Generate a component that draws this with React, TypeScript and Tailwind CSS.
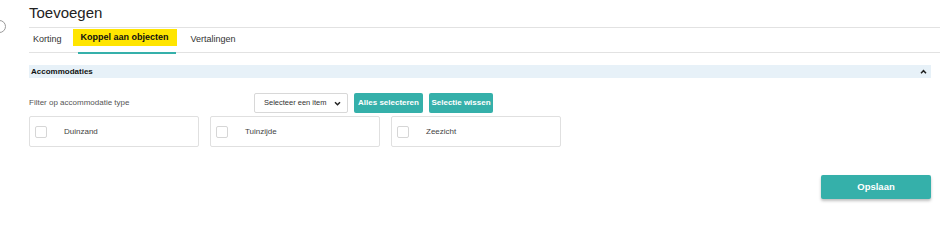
const TEAL = 'bg-[#35b0aa]';

const ACCOMMODATIES = ['Duinzand', 'Tuinzijde', 'Zeezicht'];

function Chevron({ up = false }: { up?: boolean }) {
  return (
    <svg width="7" height="5" viewBox="0 0 8 6" className="shrink-0">
      <polyline
        points={up ? '1,5 4,2 7,5' : '1,1.5 4,4.5 7,1.5'}
        fill="none"
        stroke="#222"
        strokeWidth="1.8"
      />
    </svg>
  );
}

export default function App() {
  return (
    <div className="relative min-h-[244px] bg-white font-['Liberation_Sans',Arial,sans-serif] text-[#333]">
      {/* half-hidden back circle */}
      <div className="absolute left-[-7px] top-[20px] h-[13px] w-[13px] rounded-full border border-[#9a9a9a]" />

      <div className="pl-[29px] pr-[5px]">
        <div className="h-[28px] border-b border-[#e2e2e2] pt-[4px]">
          <h1 className="text-[15px] leading-[18px] text-[#222]">Toevoegen</h1>
        </div>

        <div className="flex h-[25px] items-start border-b border-[#e2e2e2] text-[9px]">
          <button className="ml-[4px] mt-[6px] leading-[11px] text-[#333]">Korting</button>
          <div className="relative ml-[11px] h-[25px]">
            <div className="mt-[1px] flex h-[17px] items-center bg-[#ffe500] px-[8px] font-bold text-[#111]">
              Koppel aan objecten
            </div>
            <div className="absolute bottom-[-1px] left-[5px] right-[1px] h-[2px] bg-[#35b0aa]" />
          </div>
          <button className="ml-[14px] mt-[6px] leading-[11px] text-[#333]">Vertalingen</button>
        </div>

        <div className="pr-[9px]">
          <div className="mt-[12px] flex h-[13px] items-center justify-between bg-[#e7f1f8] pl-[2px] pr-[4px]">
            <span className="text-[8px] font-bold text-[#111]">Accommodaties</span>
            <Chevron up />
          </div>

          <div className="mt-[15px] flex h-[20px] items-center">
            <span className="w-[225px] text-[8px] text-[#555]">Filter op accommodatie type</span>
            <div className="flex h-[20px] w-[94px] items-center justify-between rounded-[2px] border border-[#d8d8d8] pl-[9px] pr-[6px] text-[7.5px] text-[#333]">
              Selecteer een item
              <Chevron />
            </div>
            <button className={`ml-[6px] h-[20px] w-[69px] rounded-[2px] ${TEAL} text-[8px] font-bold text-white`}>
              Alles selecteren
            </button>
            <button className={`ml-[6px] h-[20px] w-[64px] rounded-[2px] ${TEAL} text-[8px] font-bold text-white`}>
              Selectie wissen
            </button>
          </div>

          <div className="mt-[3px] flex gap-[11px]">
            {ACCOMMODATIES.map((name) => (
              <label
                key={name}
                className="flex h-[31px] w-[170px] items-center rounded-[2px] border border-[#e0e0e0] pl-[5px] text-[8px] text-[#444]"
              >
                <span className="h-[12px] w-[12px] rounded-[2px] border border-[#d6d6d6]" />
                <span className="ml-[17px]">{name}</span>
              </label>
            ))}
          </div>

          <div className="mt-[28px] flex justify-end">
            <button
              className={`h-[24px] w-[110px] rounded-[2px] ${TEAL} text-[9.5px] font-bold text-white shadow-[0_2px_3px_rgba(0,0,0,0.25)]`}
            >
              Opslaan
            </button>
          </div>
        </div>
      </div>
    </div>
  );
}
